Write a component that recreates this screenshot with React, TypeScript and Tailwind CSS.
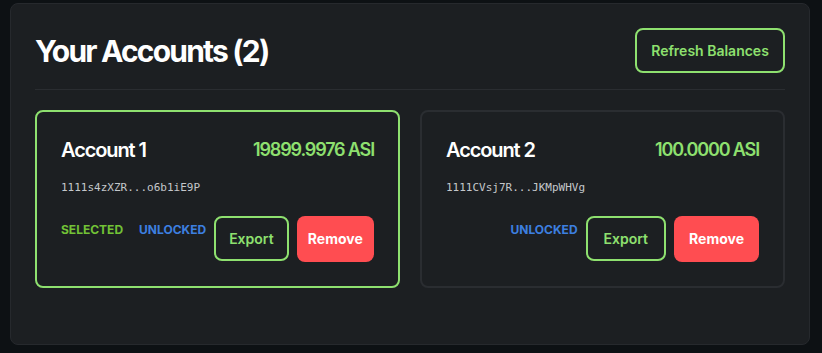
import React from "react";

type Account = {
  name: string;
  balance: string;
  address: string;
  selected: boolean;
  unlocked: boolean;
};

const accounts: Account[] = [
  { name: "Account 1", balance: "19899.9976 ASI", address: "1111s4zXZR...o6b1iE9P", selected: true, unlocked: true },
  { name: "Account 2", balance: "100.0000 ASI", address: "1111CVsj7R...JKMpWHVg", selected: false, unlocked: true },
];

const AccountCard = ({ account }: { account: Account }) => (
  <div
    className={`rounded-lg border-2 p-6 bg-[#1c1f22] ${
      account.selected ? "border-[#8ee06f]" : "border-[#2a2d31]"
    }`}
  >
    <div className="flex items-center justify-between mb-4">
      <h3 className="text-xl font-semibold tracking-[-0.055em] text-white">{account.name}</h3>
      <span className="text-lg font-semibold tracking-[-0.064em] text-[#8ee06f]">{account.balance}</span>
    </div>
    <div className="font-['DejaVu_Sans_Mono',monospace] text-[11px] leading-4 text-[#c4c7cb] mb-5">
      {account.address}
    </div>
    <div className="flex items-start justify-end gap-2">
      <div className="flex gap-4 shrink-0">
        {account.selected && (
          <span className="pt-[6px] text-xs font-bold text-[#72c236]">SELECTED</span>
        )}
        {account.unlocked && (
          <span className="pt-[6px] text-xs font-bold text-[#3d7fe0]">UNLOCKED</span>
        )}
      </div>
      <button className="min-w-0 flex items-center justify-center h-[45px] px-4 rounded-lg border-2 border-[#8ee06f] text-sm font-semibold text-[#8ee06f] whitespace-nowrap">
        Export
      </button>
      <button className="min-w-0 flex items-center justify-center h-[46px] px-[15px] rounded-lg bg-[#ff4d51] text-sm font-bold text-white whitespace-nowrap">
        Remove
      </button>
    </div>
  </div>
);

export default function App() {
  return (
    <div className="min-h-[353px] bg-[#0d1114] px-[10px] pt-[3px] font-['Inter',sans-serif]">
      <div className="w-[800px] rounded-lg border border-[#26292d] bg-[#1c1f22] p-6">
        <div className="flex items-center justify-between border-b border-[#2a2d31] pb-4 mb-5">
          <h2 className="text-3xl font-bold tracking-[-0.06em] text-white">Your Accounts (2)</h2>
          <button className="h-[45px] w-[150px] rounded-lg border-2 border-[#8ee06f] text-sm font-semibold text-[#8ee06f]">
            Refresh Balances
          </button>
        </div>
        <div className="grid grid-cols-2 gap-5 mb-8">
          {accounts.map((a) => (
            <AccountCard key={a.name} account={a} />
          ))}
        </div>
      </div>
    </div>
  );
}
